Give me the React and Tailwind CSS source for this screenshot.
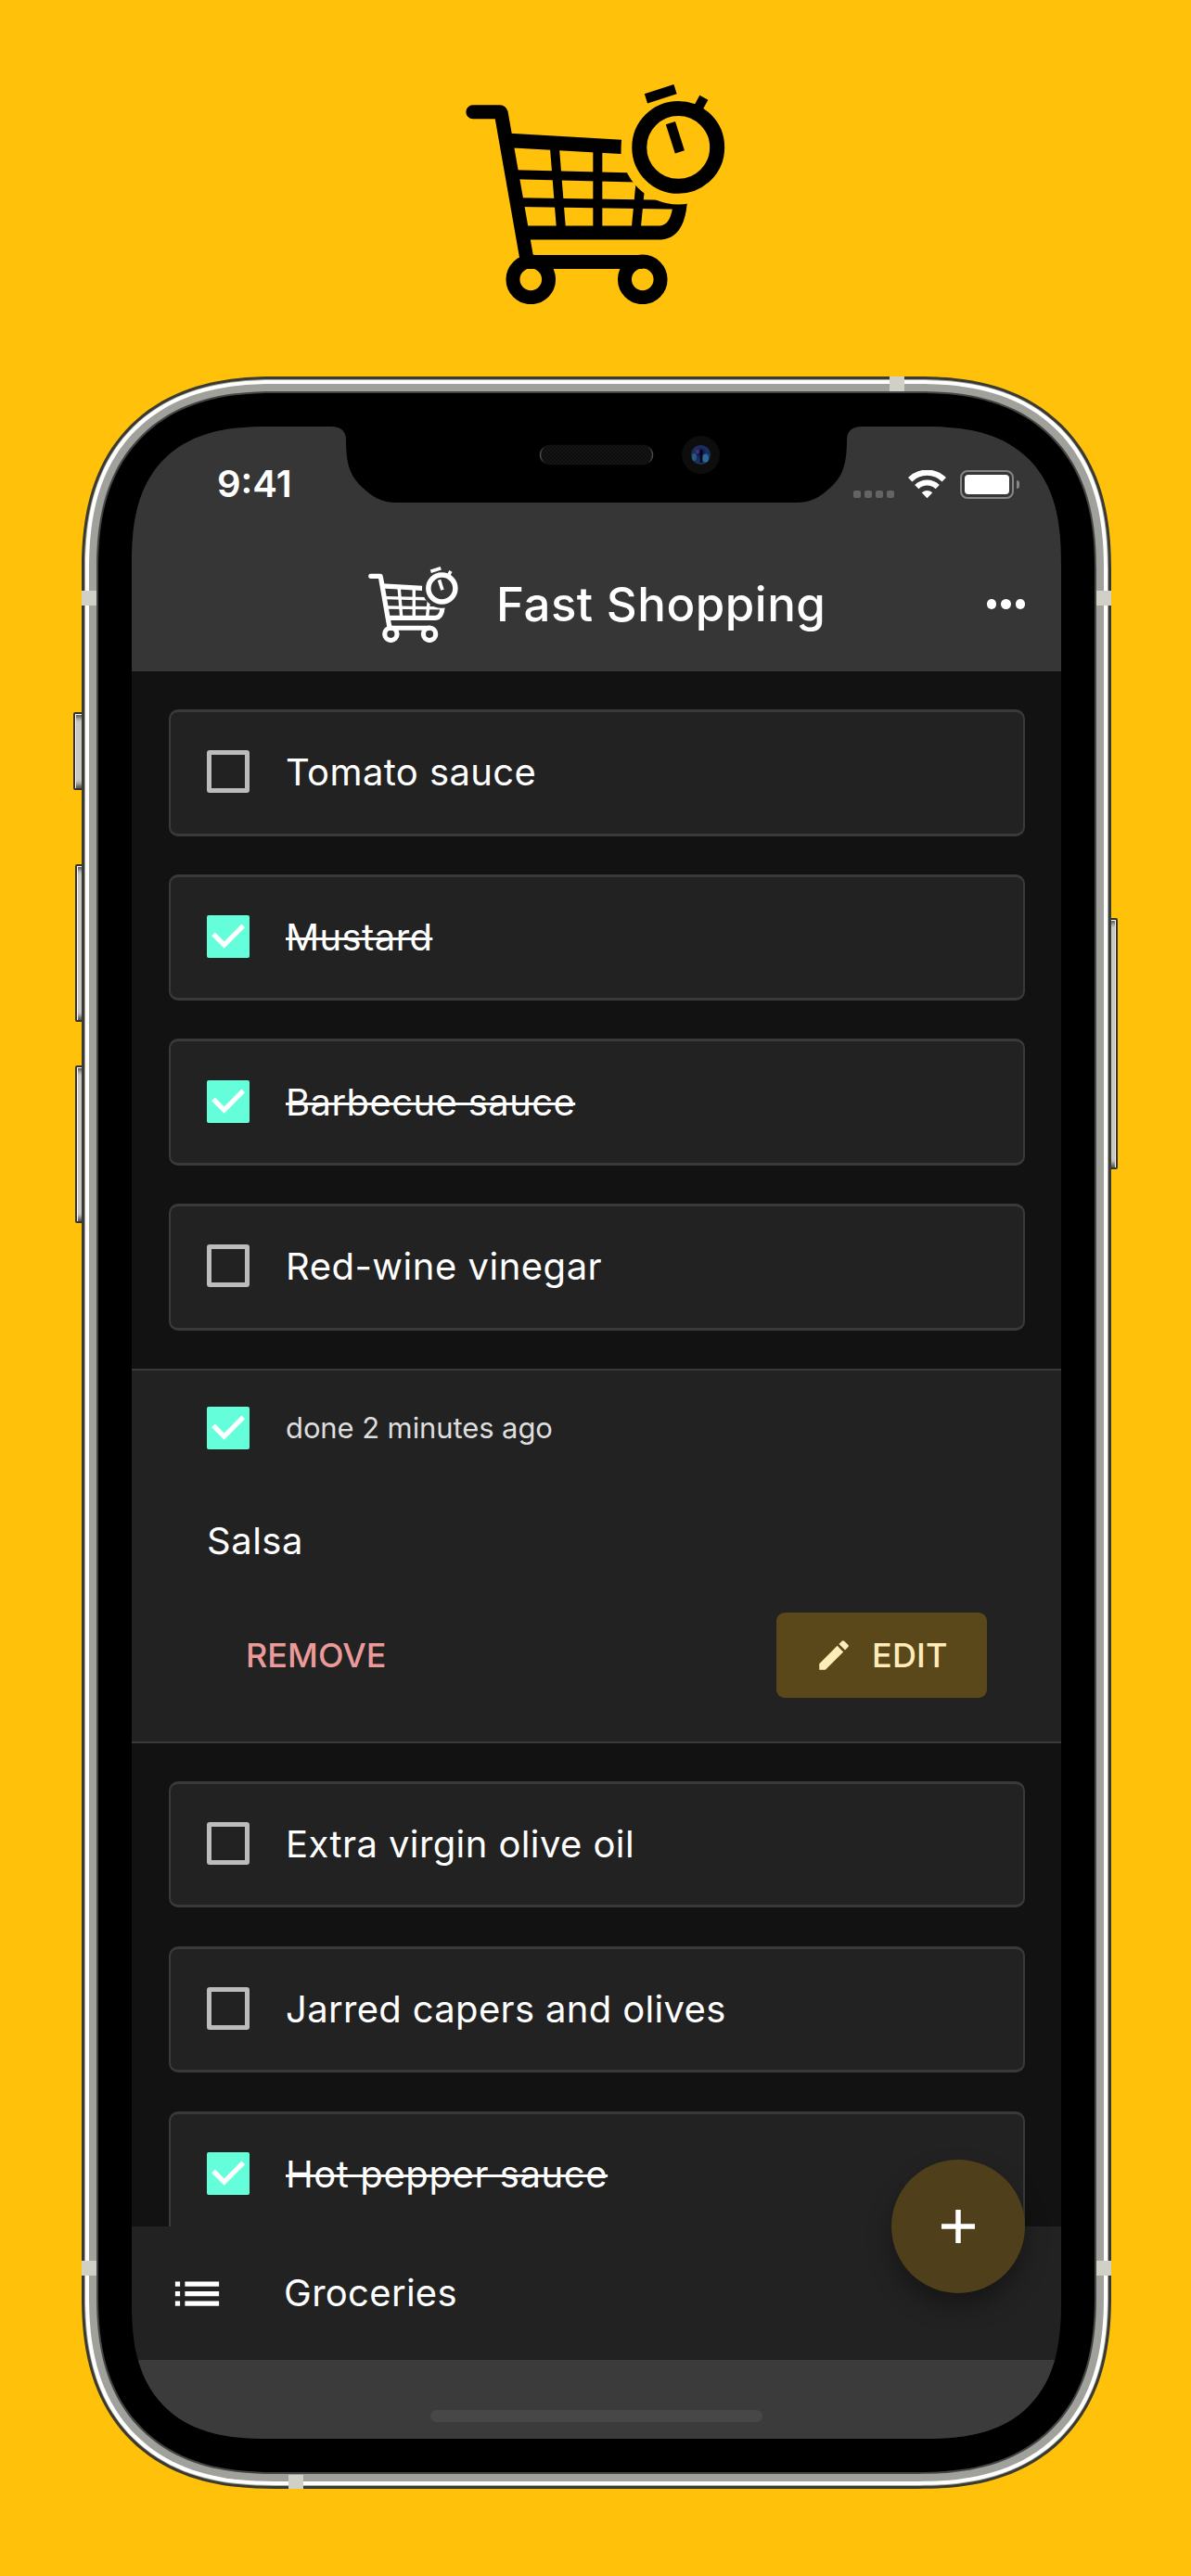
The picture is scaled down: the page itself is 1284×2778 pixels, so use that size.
import React from "react";
import { MdList, MdEdit } from "react-icons/md";

function CartLogo({ className, id }) {
  return (
    <svg className={className} viewBox="37 33 840 712" fill="none" stroke="currentColor">
      <defs>
        <mask id={id} maskUnits="userSpaceOnUse" x="0" y="0" width="930" height="780">
          <rect width="930" height="780" fill="white" stroke="none" />
          <circle cx="725" cy="237" r="185" fill="black" stroke="none" />
        </mask>
      </defs>
      <path d="M60 122.500H147Q151 122.500 152 130L236 608" strokeWidth="45" strokeLinecap="round" strokeLinejoin="round" />
      <g mask={`url(#${id})`}>
        <path d="M165 214L541 235.500" strokeWidth="46" />
        <path d="M195 325L590 335" strokeWidth="30" />
        <path d="M210 415L740 423" strokeWidth="29" />
        <path d="M324 230L346 505M464 240V505M603 350L588 505" strokeWidth="30" />
        <path d="M225 513.500H668Q722 510 731 420L736 370" strokeWidth="45" />
      </g>
      <path d="M236 608H610" strokeWidth="45" />
      <circle cx="247.500" cy="665" r="58" strokeWidth="45" />
      <circle cx="609.500" cy="665" r="58" strokeWidth="45" />
      <circle cx="725" cy="237" r="126" strokeWidth="48" />
      <path d="M620.500 79L715.500 48.500" strokeWidth="32" />
      <path d="M808 76L786 116" strokeWidth="31" />
      <path d="M700 158L730 252" strokeWidth="32" />
    </svg>
  );
}

function Checkbox({ checked }) {
  if (!checked) {
    return <span className="block size-[46px] shrink-0 rounded-[3px] border-[5px] border-[#bcbcbc]" />;
  }
  return (
    <span className="block size-[46px] shrink-0 rounded-[2px] bg-[#64ffda]">
      <svg viewBox="0 0 46 46" className="size-full" fill="none">
        <path d="M7 20.300L18.700 32L39.300 11.300" stroke="#fff" strokeWidth="5.200" />
      </svg>
    </span>
  );
}

function Item({ label, checked, tracking = "tracking-[0.4px]" }) {
  const strike = checked ? "line-through decoration-[3px]" : "";
  return (
    <li className="flex h-[136.5px] shrink-0 items-center rounded-[10px] border-x-2 border-y-[3px] border-[#3a3a3a] bg-[#222222] pl-[39px]">
      <div className="pb-[2px]">
        <Checkbox checked={checked} />
      </div>
      <span className={`ml-[39px] whitespace-nowrap text-[40px] leading-[48px] ${tracking} ${strike}`}>{label}</span>
    </li>
  );
}

const before = [
  { label: "Tomato sauce", checked: false },
  { label: "Mustard", checked: true },
  { label: "Barbecue sauce", checked: true },
  { label: "Red-wine vinegar", checked: false, tracking: "tracking-[0.5px]" },
];

const after = [
  { label: "Extra virgin olive oil", checked: false },
  { label: "Jarred capers and olives", checked: false, tracking: "tracking-[0.33px]" },
  { label: "Hot pepper sauce", checked: true, tracking: "tracking-[0.58px]" },
];

function StatusBar() {
  return (
    <div className="flex h-[124px] items-start justify-between pl-[92px] pr-[45px] pt-[38px]">
      <span className="text-[40px] font-semibold leading-[48px]">9:41</span>
      <div className="flex h-[48px] items-center pt-[0.5px]">
        <div className="mt-[22px] flex gap-1">
          <span className="size-2 rounded-[2px] bg-[#646464]" />
          <span className="size-2 rounded-[2px] bg-[#646464]" />
          <span className="size-2 rounded-[2px] bg-[#646464]" />
          <span className="size-2 rounded-[2px] bg-[#646464]" />
        </div>
        <svg className="ml-[15px] h-[31px] w-[41px]" viewBox="0 0 41 31" fill="none" stroke="#fff">
          <path d="M2.200 10.200A26 26 0 0 1 38.800 10.200" strokeWidth="6.200" />
          <path d="M9.300 18.200A15.800 15.800 0 0 1 31.700 18.200" strokeWidth="6" />
          <path d="M14.700 24.300Q20.500 19.600 26.300 24.300L20.500 30.300Z" fill="#fff" stroke="none" />
        </svg>
        <span className="ml-[15px] block h-[31px] w-[58px] rounded-[8px] border-2 border-[#868686] p-[3px]">
          <span className="block size-full rounded-[4px] bg-white" />
        </span>
        <span className="ml-[3px] h-[9px] w-[3px] rounded-r-full bg-[#868686]" />
      </div>
    </div>
  );
}

function AppBar() {
  return (
    <div className="flex h-[140px] items-center pl-[255px] pr-[39px]">
      <CartLogo id="cart-bar" className="-mt-[5px] h-[82px] w-[97px]" />
      <h1 className="-mt-[4px] ml-[41px] whitespace-nowrap text-[51px] font-medium leading-[62px] tracking-[0.5px]">
        Fast Shopping
      </h1>
      <div className="-mt-[5px] ml-auto flex gap-[5px]">
        <span className="h-[11px] w-[10.5px] rounded-full bg-white" />
        <span className="h-[11px] w-[10.5px] rounded-full bg-white" />
        <span className="h-[11px] w-[10.5px] rounded-full bg-white" />
      </div>
    </div>
  );
}

function Expanded() {
  return (
    <section className="mt-[41px] flex h-[404px] shrink-0 flex-col border-y-2 border-[#3a3a3a] bg-[#222222] pl-[81px] pr-[80px] pt-[39px]">
      <div className="flex items-center">
        <Checkbox checked />
        <span className="ml-[39px] whitespace-nowrap text-[31px] leading-[38px] tracking-[-0.1px] text-[#dedede]">
          done 2 minutes ago
        </span>
      </div>
      <p className="mt-[75px] text-[40px] leading-[48px] tracking-[0.5px]">Salsa</p>
      <div className="mt-[53px] flex items-center justify-between">
        <button className="ml-[42px] text-[36px] font-medium leading-[44px] text-[#eb9a9a]">REMOVE</button>
        <button className="flex h-[92px] w-[227px] items-center rounded-[9px] bg-[#5a481b] pl-[41px] text-[#ffecb8]">
          <MdEdit className="size-[42px]" />
          <span className="ml-[20px] text-[36px] font-medium leading-[44px] tracking-[0.2px]">EDIT</span>
        </button>
      </div>
    </section>
  );
}

function Notch() {
  return (
    <svg className="absolute left-[215px] top-[-1px] h-[84px] w-[572px]" viewBox="0 0 572 84">
      <defs>
        <pattern id="mesh" width="4" height="4" patternUnits="userSpaceOnUse">
          <rect width="4" height="4" fill="#0c0c0c" />
          <circle cx="1" cy="1" r="0.800" fill="#202020" />
          <circle cx="3" cy="3" r="0.800" fill="#202020" />
        </pattern>
        <linearGradient id="rim">
          <stop offset="0" stopColor="#4a4a4a" />
          <stop offset="0.040" stopColor="#121212" />
          <stop offset="0.960" stopColor="#121212" />
          <stop offset="1" stopColor="#4a4a4a" />
        </linearGradient>
        <radialGradient id="lens" cx="0.500" cy="0.400" r="0.600">
          <stop offset="0" stopColor="#0a0a2a" />
          <stop offset="0.500" stopColor="#1b2c66" />
          <stop offset="1" stopColor="#16354f" />
        </radialGradient>
      </defs>
      <path d="M0 0V1Q15.500 1 16 15C16 45 22 56 34 67C45 77 54 83 71 83H501C518 83 527 77 538 67C550 56 556 45 556 15Q556.500 1 572 1V0Z" fill="#000" />
      <rect x="225.500" y="21.500" width="121" height="20" rx="10" fill="url(#mesh)" stroke="url(#rim)" strokeWidth="1.500" />
      <circle cx="398.500" cy="31.500" r="20.500" fill="#0d0d0d" />
      <circle cx="398.500" cy="31.500" r="10.500" fill="url(#lens)" />
      <ellipse cx="403.500" cy="35" rx="3.500" ry="4.500" fill="#2e6799" />
      <ellipse cx="391.500" cy="34" rx="2.500" ry="4" fill="#27587f" />
      <circle cx="395" cy="28" r="2.200" fill="#4b2f75" />
      <path d="M399 26V40" stroke="#05051a" strokeWidth="2.500" />
    </svg>
  );
}

function Screen() {
  return (
    <div className="relative flex h-[2170px] w-[1002px] flex-col overflow-hidden rounded-[150px] bg-[#121212] [corner-shape:superellipse(1.38)]">
      <header className="h-[264px] shrink-0 bg-[#363636]">
        <StatusBar />
        <AppBar />
      </header>
      <main className="flex h-[1677px] flex-col overflow-hidden pt-[41px]">
        <ul className="mr-[39px] ml-[40px] flex flex-col gap-[41.2px]">
          {before.map((i) => (
            <Item key={i.label} {...i} />
          ))}
        </ul>
        <Expanded />
        <ul className="mt-[41px] mr-[39px] ml-[40px] flex flex-col gap-[41.5px]">
          {after.map((i) => (
            <Item key={i.label} {...i} />
          ))}
        </ul>
      </main>
      <nav className="flex h-[144px] shrink-0 items-center bg-[#222222] pl-[39px]">
        <MdList className="size-[63px]" />
        <span className="ml-[62px] text-[40px] leading-[48px] tracking-[0.3px]">Groceries</span>
      </nav>
      <div className="flex flex-1 justify-center bg-[#3b3b3b] pt-[54px]">
        <span className="h-[13px] w-[358px] rounded-full bg-[#474747]" />
      </div>
      <button className="absolute top-[1869px] right-[39px] flex size-[144px] items-center justify-center rounded-full bg-[#4f401b] shadow-[0_14px_26px_rgba(0,0,0,0.35)]">
        <svg className="size-[36px]" viewBox="0 0 36 36" stroke="#fff" strokeWidth="5.500">
          <path d="M0 18H36M18 0V36" />
        </svg>
      </button>
      <Notch />
    </div>
  );
}

function Phone() {
  return (
    <div className="relative mt-[78px] ml-[88px] w-[1110px]">
      <span className="absolute left-[-9px] top-[362px] h-[84px] w-[12px] rounded-[2px] border-2 border-[#33332c] bg-[#c9c9c6] shadow-[inset_1px_1px_0_#fff,inset_0_-8px_5px_-4px_#555,inset_0_8px_5px_-4px_#555]" />
      <span className="absolute left-[-7px] top-[526px] h-[170px] w-[10px] rounded-[2px] border-2 border-[#33332c] bg-[#c9c9c6] shadow-[inset_1px_1px_0_#fff,inset_0_-8px_5px_-4px_#555,inset_0_8px_5px_-4px_#555]" />
      <span className="absolute left-[-7px] top-[743px] h-[170px] w-[10px] rounded-[2px] border-2 border-[#33332c] bg-[#c9c9c6] shadow-[inset_1px_1px_0_#fff,inset_0_-8px_5px_-4px_#555,inset_0_8px_5px_-4px_#555]" />
      <span className="absolute right-[-7px] top-[584px] h-[271px] w-[10px] rounded-[2px] border-2 border-[#33332c] bg-[#c9c9c6] shadow-[inset_-1px_1px_0_#fff,inset_0_-8px_5px_-4px_#555,inset_0_8px_5px_-4px_#555]" />
      <div className="relative rounded-[208px] bg-[#3a3a30] p-[3px] [corner-shape:superellipse(1.25)]">
        <div className="rounded-[205px] bg-[#a9a9a2] p-px [corner-shape:superellipse(1.25)]">
          <div className="rounded-[204px] bg-white p-[4px] [corner-shape:superellipse(1.26)]">
            <div className="rounded-[200px] bg-[#a0a19a] p-[8px] [corner-shape:superellipse(1.26)]">
              <div className="rounded-[192px] bg-[#454545] p-[2px] [corner-shape:superellipse(1.27)]">
                <div className="rounded-[190px] bg-black p-[36px] [corner-shape:superellipse(1.27)]">
                  <Screen />
                </div>
              </div>
            </div>
          </div>
        </div>
      </div>
      <span className="absolute left-0 top-[231px] h-[16px] w-[16px] bg-[#d1d0c6]" />
      <span className="absolute right-0 top-[231px] h-[16px] w-[16px] bg-[#d1d0c6]" />
      <span className="absolute left-[871px] top-0 h-[16px] w-[16px] bg-[#d1d0c6]" />
      <span className="absolute left-0 top-[2032px] h-[16px] w-[16px] bg-[#d1d0c6]" />
      <span className="absolute right-0 top-[2032px] h-[16px] w-[16px] bg-[#d1d0c6]" />
      <span className="absolute bottom-0 left-[223px] h-[15px] w-[16px] bg-[#d1d0c6]" />
    </div>
  );
}

export default function App() {
  return (
    <div className="h-[2778px] w-[1284px] overflow-hidden bg-[#ffc109] pt-[91px] font-['Inter',sans-serif] text-white">
      <CartLogo id="cart-top" className="mx-auto h-[237px] w-[280px] text-black" />
      <Phone />
    </div>
  );
}
